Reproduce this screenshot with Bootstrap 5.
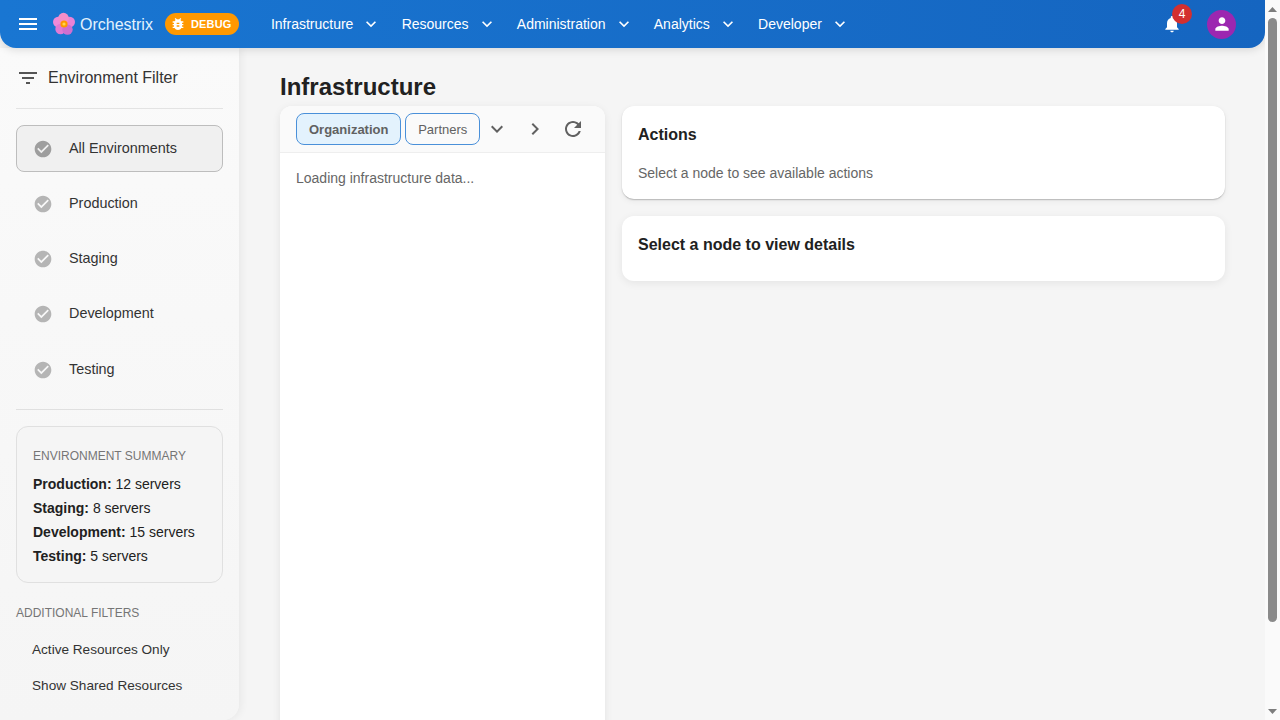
<!DOCTYPE html>
<html lang="en">
<head>
<meta charset="utf-8">
<title>Orchestrix</title>
<link href="https://cdn.jsdelivr.net/npm/bootstrap@5.3.0/dist/css/bootstrap.min.css" rel="stylesheet">
<style>
html,body{background:#f5f5f5;height:720px;overflow:hidden;}
body{font-family:"Liberation Sans",Arial,sans-serif;color:#212121;}
svg{fill:currentColor;display:block;flex:none;}
.app-shell{height:720px;}
.app-col{width:1265px;flex:none;height:720px;overflow:hidden;}
.scroll-rail{width:15px;flex:none;height:720px;background:#fafafa;padding:0 3px;}
.rail-up{width:9px;height:18px;display:flex;align-items:center;justify-content:center;color:#7d7d7d;}
.rail-thumb{width:9px;height:604px;background:#8a8a8a;border-radius:5px;}
.rail-gap{flex:1;}
.top-bar{height:48px;padding:0;background:linear-gradient(90deg,#1976d2,#1565c0);border-radius:0 0 16px 16px;color:#fff;box-shadow:0 2px 8px rgba(0,0,0,.12);position:relative;z-index:3;}
.menu-btn{margin-left:16px;width:24px;height:24px;color:#fff;}
.brand-logo{margin-left:12px;}
.brand-name{font-size:16px;margin-left:4px;padding-top:1px;color:#e3f2fd;}
.debug-pill{margin-left:12px;height:22px;width:74px;border-radius:11px;background:#ff9800;font-size:11px;font-weight:700;color:#fff;padding-left:5px;gap:5px;letter-spacing:.2px;}
.top-links{margin-left:32px;gap:20.25px;}
.top-link{font-size:14px;color:#fff;gap:8px;text-decoration:none;}
.bell-wrap{position:relative;width:20px;height:20px;margin-right:25px;}
.bell-num{position:absolute;left:10px;top:-10px;width:20px;height:20px;border-radius:50%;background:#d32f2f;color:#fff;font-size:12px;line-height:20px;text-align:center;}
.user-dot{width:29px;height:29px;border-radius:50%;background:#9c27b0;color:#fff;margin-right:29px;}
.side-panel{width:239px;height:672px;flex:none;background:linear-gradient(180deg,#fafafa,#f5f5f5);border-radius:0 0 16px 0;box-shadow:2px 0 8px rgba(0,0,0,.06);padding:0 16px;position:relative;z-index:2;}
.side-head{height:61px;font-size:16px;color:#333;gap:8px;border-bottom:1px solid #e3e3e3;margin-bottom:16px;}
.side-head svg{color:#555;}
.env-item{height:47px;margin-bottom:8.25px;padding-left:18px;gap:16px;font-size:14.4px;color:#333;border:1px solid transparent;border-radius:8px;}
.env-item svg{color:#b5b5b5;margin-left:-2px;}
.env-item.chosen{background:#f0f0f0;border-color:#bdbdbd;}
.env-item.chosen svg{color:#9e9e9e;}
.side-rule{border-top:1px solid #e0e0e0;margin:16px 0;height:0;}
.sum-box{border:1px solid #e0e0e0;border-radius:12px;padding:15px 16px;height:157px;background:#f5f5f5;font-size:14px;line-height:24px;color:#212121;}
.sum-title{font-size:12px;line-height:28px;height:30px;color:#757575;}
.more-title{font-size:12px;color:#757575;margin-top:22px;line-height:16px;margin-bottom:11px;}
.more-item{font-size:13.6px;height:36px;padding-left:16px;display:flex;align-items:center;color:#333;}
.main-area{padding:24px 40px 0 41px;min-width:0;}
.page-title{font-size:24px;font-weight:700;line-height:30px;margin:0 0 4px;color:#212121;height:30px;}
.tree-panel{width:325px;height:709px;flex:none;background:#fff;border-radius:12px;box-shadow:0 2px 8px rgba(0,0,0,.08);overflow:hidden;}
.tree-tools{height:47px;background:#fafafa;border-bottom:1px solid #eee;padding-left:16px;gap:4px;color:#616161;}
.tab-pill{height:32px;border:1px solid #4a90d9;border-radius:8px;background:#fff;color:#616161;font-size:13px;display:flex;align-items:center;padding:1px 12px 0;}
.tab-pill.chosen{background:#e3f2fd;font-weight:700;}
.tab-pill.plain{margin-left:-.3px;background:#fafafa;}
.tool-icon{width:34px;height:34px;display:flex;align-items:center;justify-content:center;}
.tool-first{margin-left:-4px;}
.tree-msg{padding:15px 16px;font-size:14px;color:#666;line-height:20px;}
.info-stack{gap:17px;margin-left:17px;width:603px;flex:none;}
.info-panel{background:#fff;border-radius:12px;padding:17px 16px 16px;box-shadow:0 2px 8px rgba(0,0,0,.07);}
.info-panel h3{font-size:16px;font-weight:700;line-height:24px;margin:0;color:#212121;}
.act-panel{height:93px;box-shadow:0 1px 2px -1px rgba(0,0,0,.7),0 2px 6px rgba(0,0,0,.06);}
.act-panel p{font-size:14px;color:#666;line-height:20px;margin:16px 0 0;}
.det-panel{height:65px;}
</style>
</head>
<body>
<div class="app-shell d-flex">
<div class="app-col">
<nav class="navbar top-bar flex-nowrap justify-content-start">
  <svg class="menu-btn" viewBox="0 0 24 24"><path d="M3 18h18v-2H3v2zm0-5h18v-2H3v2zm0-7v2h18V6H3z"/></svg>
  <svg class="brand-logo" width="24" height="24" viewBox="0 0 24 24">
    <circle cx="6.2" cy="10" r="5.2" fill="#f08ad8"/><circle cx="17.8" cy="10" r="5.2" fill="#ea82d6"/><circle cx="8.5" cy="17" r="5.2" fill="#e27ad4"/><circle cx="15.5" cy="17.6" r="5.2" fill="#cf6fd0"/><circle cx="11.5" cy="6.2" r="5.4" fill="#f48ec8"/><circle cx="12" cy="12" r="3.6" fill="#ff9800"/><circle cx="12" cy="12" r="1.6" fill="#ffd54f"/>
  </svg>
  <span class="brand-name">Orchestrix</span>
  <span class="debug-pill d-flex align-items-center">
    <svg width="16" height="16" viewBox="0 0 24 24"><path d="M20 8h-2.81c-.45-.78-1.07-1.45-1.82-1.96L17 4.41 15.59 3l-2.17 2.17C12.96 5.06 12.49 5 12 5c-.49 0-.96.06-1.41.17L8.41 3 7 4.41l1.62 1.63C7.88 6.55 7.26 7.22 6.81 8H4v2h2.09c-.05.33-.09.66-.09 1v1H4v2h2v1c0 .34.04.67.09 1H4v2h2.81c1.04 1.79 2.97 3 5.19 3s4.15-1.21 5.19-3H20v-2h-2.09c.05-.33.09-.66.09-1v-1h2v-2h-2v-1c0-.34-.04-.67-.09-1H20V8zm-6 8h-4v-2h4v2zm0-4h-4v-2h4v2z"/></svg>
    DEBUG
  </span>
  <div class="top-links d-flex align-items-center">
    <a class="top-link d-flex align-items-center" href="#">Infrastructure <svg width="20" height="20" viewBox="0 0 24 24"><path d="M16.59 8.59L12 13.17 7.41 8.59 6 10l6 6 6-6z"/></svg></a>
    <a class="top-link d-flex align-items-center" href="#">Resources <svg width="20" height="20" viewBox="0 0 24 24"><path d="M16.59 8.59L12 13.17 7.41 8.59 6 10l6 6 6-6z"/></svg></a>
    <a class="top-link d-flex align-items-center" href="#">Administration <svg width="20" height="20" viewBox="0 0 24 24"><path d="M16.59 8.59L12 13.17 7.41 8.59 6 10l6 6 6-6z"/></svg></a>
    <a class="top-link d-flex align-items-center" href="#">Analytics <svg width="20" height="20" viewBox="0 0 24 24"><path d="M16.59 8.59L12 13.17 7.41 8.59 6 10l6 6 6-6z"/></svg></a>
    <a class="top-link d-flex align-items-center" href="#">Developer <svg width="20" height="20" viewBox="0 0 24 24"><path d="M16.59 8.59L12 13.17 7.41 8.59 6 10l6 6 6-6z"/></svg></a>
  </div>
  <div class="ms-auto d-flex align-items-center">
    <div class="bell-wrap"><svg width="20" height="20" viewBox="0 0 24 24"><path d="M12 22c1.1 0 2-.9 2-2h-4c0 1.1.89 2 2 2zm6-6v-5c0-3.07-1.64-5.64-4.5-6.32V4c0-.83-.67-1.5-1.5-1.5s-1.5.67-1.5 1.5v.68C7.63 5.36 6 7.92 6 11v5l-2 2v1h16v-1l-2-2z"/></svg><span class="bell-num">4</span></div>
    <div class="user-dot d-flex align-items-center justify-content-center"><svg width="20" height="20" viewBox="0 0 24 24"><path d="M12 12c2.21 0 4-1.79 4-4s-1.79-4-4-4-4 1.79-4 4 1.79 4 4 4zm0 2c-2.67 0-8 1.34-8 4v2h16v-2c0-2.66-5.33-4-8-4z"/></svg></div>
  </div>
</nav>
<div class="d-flex align-items-start">
  <aside class="side-panel">
    <div class="side-head d-flex align-items-center">
      <svg width="24" height="24" viewBox="0 0 24 24"><path d="M10 18h4v-2h-4v2zM3 6v2h18V6H3zm3 7h12v-2H6v2z"/></svg>
      Environment Filter
    </div>
    <div class="env-item chosen d-flex align-items-center"><svg width="20" height="20" viewBox="0 0 24 24"><path d="M12 2C6.48 2 2 6.48 2 12s4.48 10 10 10 10-4.48 10-10S17.52 2 12 2zm-2 15l-5-5 1.41-1.41L10 14.17l7.59-7.59L19 8l-9 9z"/></svg>All Environments</div>
    <div class="env-item d-flex align-items-center"><svg width="20" height="20" viewBox="0 0 24 24"><path d="M12 2C6.48 2 2 6.48 2 12s4.48 10 10 10 10-4.48 10-10S17.52 2 12 2zm-2 15l-5-5 1.41-1.41L10 14.17l7.59-7.59L19 8l-9 9z"/></svg>Production</div>
    <div class="env-item d-flex align-items-center"><svg width="20" height="20" viewBox="0 0 24 24"><path d="M12 2C6.48 2 2 6.48 2 12s4.48 10 10 10 10-4.48 10-10S17.52 2 12 2zm-2 15l-5-5 1.41-1.41L10 14.17l7.59-7.59L19 8l-9 9z"/></svg>Staging</div>
    <div class="env-item d-flex align-items-center"><svg width="20" height="20" viewBox="0 0 24 24"><path d="M12 2C6.48 2 2 6.48 2 12s4.48 10 10 10 10-4.48 10-10S17.52 2 12 2zm-2 15l-5-5 1.41-1.41L10 14.17l7.59-7.59L19 8l-9 9z"/></svg>Development</div>
    <div class="env-item d-flex align-items-center"><svg width="20" height="20" viewBox="0 0 24 24"><path d="M12 2C6.48 2 2 6.48 2 12s4.48 10 10 10 10-4.48 10-10S17.52 2 12 2zm-2 15l-5-5 1.41-1.41L10 14.17l7.59-7.59L19 8l-9 9z"/></svg>Testing</div>
    <div class="side-rule"></div>
    <div class="sum-box">
      <div class="sum-title">ENVIRONMENT SUMMARY</div>
      <div><b>Production:</b> 12 servers</div>
      <div><b>Staging:</b> 8 servers</div>
      <div><b>Development:</b> 15 servers</div>
      <div><b>Testing:</b> 5 servers</div>
    </div>
    <div class="more-title">ADDITIONAL FILTERS</div>
    <div class="more-item">Active Resources Only</div>
    <div class="more-item">Show Shared Resources</div>
  </aside>
  <main class="main-area flex-grow-1">
    <h1 class="page-title">Infrastructure</h1>
    <div class="d-flex align-items-start">
      <section class="tree-panel">
        <div class="tree-tools d-flex align-items-center">
          <span class="tab-pill chosen">Organization</span>
          <span class="tab-pill plain">Partners</span>
          <span class="tool-icon tool-first"><svg width="24" height="24" viewBox="0 0 24 24"><path d="M16.59 8.59L12 13.17 7.41 8.59 6 10l6 6 6-6z"/></svg></span>
          <span class="tool-icon"><svg width="24" height="24" viewBox="0 0 24 24"><path d="M10 6L8.59 7.41 13.17 12l-4.58 4.59L10 18l6-6z"/></svg></span>
          <span class="tool-icon"><svg width="24" height="24" viewBox="0 0 24 24"><path d="M17.65 6.35C16.2 4.9 14.21 4 12 4c-4.42 0-7.99 3.58-7.99 8s3.57 8 7.99 8c3.73 0 6.84-2.55 7.73-6h-2.08c-.82 2.33-3.04 4-5.65 4-3.31 0-6-2.69-6-6s2.69-6 6-6c1.66 0 3.14.69 4.22 1.78L13 11h7V4l-2.35 2.35z"/></svg></span>
        </div>
        <div class="tree-msg">Loading infrastructure data...</div>
      </section>
      <div class="info-stack d-flex flex-column">
        <section class="info-panel act-panel">
          <h3>Actions</h3>
          <p>Select a node to see available actions</p>
        </section>
        <section class="info-panel det-panel">
          <h3>Select a node to view details</h3>
        </section>
      </div>
    </div>
  </main>
</div>
</div>
<div class="scroll-rail d-flex flex-column align-items-center">
  <div class="rail-up"><svg width="9" height="5" viewBox="0 0 9 5"><path d="M4.5 0L9 5H0z"/></svg></div>
  <div class="rail-thumb"></div>
  <div class="rail-gap"></div>
  <div class="rail-up"><svg width="9" height="5" viewBox="0 0 9 5"><path d="M0 0h9L4.5 5z"/></svg></div>
</div>
</div>
<script src="https://cdn.jsdelivr.net/npm/bootstrap@5.3.0/dist/js/bootstrap.bundle.min.js"></script>
</body>
</html>
